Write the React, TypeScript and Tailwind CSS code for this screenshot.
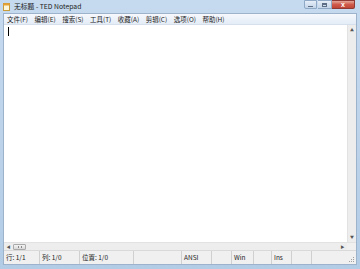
const font = { fontFamily: '"Noto Sans CJK SC", "Liberation Sans", sans-serif' };

const menus = ["文件(F)", "编辑(E)", "搜索(S)", "工具(T)", "收藏(A)", "剪辑(C)", "选项(O)", "帮助(H)"];

const panels: { label: string; w: string }[] = [
  { label: "行: 1/1", w: "w-[36px]" },
  { label: "列: 1/0", w: "w-[40px]" },
  { label: "位置: 1/0", w: "w-[54px]" },
  { label: "", w: "w-[48px]" },
  { label: "ANSI", w: "w-[30px]" },
  { label: "", w: "w-[20px]" },
  { label: "Win", w: "w-[22px]" },
  { label: "", w: "w-[18px]" },
  { label: "Ins", w: "w-[20px]" },
  { label: "", w: "w-[20px]" },
];

const App: React.FC = () => {
  return (
    <div
      className="w-[360px] h-[269px] flex flex-col bg-gradient-to-b from-[#c6daef] via-[#bcd3ea] to-[#b3cce6] text-[#1e1e1e] overflow-hidden"
      style={font}
    >
      {/* title bar */}
      <div className="h-[13px] flex items-start shrink-0">
        <div className="flex items-center h-[13px] pl-[3px] gap-[4px]">
          <svg width="7" height="8" viewBox="0 0 7 8">
            <rect x="0.5" y="0.5" width="6" height="7" fill="#fdf6d8" stroke="#c89a3a" />
            <rect x="0.5" y="0.5" width="6" height="2" fill="#e8a030" />
          </svg>
          <span className="text-[6.8px] leading-none text-[#1a1a1a]">无标题 - TED Notepad</span>
        </div>
        <div className="ml-auto flex mr-[5px]">
          <div className="w-[13px] h-[9px] mr-[1px] rounded-bl-[2px] border border-[#8ea8c6] bg-gradient-to-b from-[#e6eef8] to-[#c3d4e8] flex items-end justify-center pb-[1px]">
            <div className="w-[5px] h-[1.5px] bg-[#5d6f86]" />
          </div>
          <div className="w-[14px] h-[9px] border border-l-0 border-[#8ea8c6] bg-gradient-to-b from-[#e6eef8] to-[#c3d4e8] flex items-center justify-center">
            <div className="w-[5px] h-[4px] border border-[#5d6f86] border-t-2" />
          </div>
          <div className="w-[23px] h-[9px] rounded-br-[2px] border border-l-0 border-[#8f3a34] bg-gradient-to-b from-[#e5a69a] via-[#cf5a4b] to-[#c04536] flex items-center justify-center">
            <span className="text-[7px] leading-none font-bold text-white" style={{ fontFamily: '"Liberation Sans", sans-serif' }}>x</span>
          </div>
        </div>
      </div>

      {/* client area */}
      <div className="flex-1 flex flex-col mx-[3px] min-h-0 border border-[#9db3cc]">
        {/* menu bar */}
        <div className="h-[11px] shrink-0 flex items-center gap-[6.5px] pl-[3px] bg-gradient-to-b from-[#f6f9fd] to-[#e4ecf6] border-b border-[#d6e0ec]">
          {menus.map((m) => (
            <span key={m} className="text-[6.5px] leading-none text-[#222]">
              {m}
            </span>
          ))}
        </div>

        {/* editor */}
        <div className="flex-1 flex min-h-0">
          <div className="flex-1 bg-white pl-[4px] pt-[2px]">
            <div className="w-[1px] h-[9px] bg-black" />
          </div>
          <div className="w-[9px] bg-[#ededed] border-l border-[#e2e2e2] flex flex-col items-center justify-between py-[3px]">
            <span className="text-[4px] leading-none text-[#555]">▲</span>
            <span className="text-[4px] leading-none text-[#555]">▼</span>
          </div>
        </div>

        {/* horizontal scrollbar */}
        <div className="h-[8px] shrink-0 flex bg-[#ededed] border-t border-[#e2e2e2]">
          <div className="w-[9px] flex items-center justify-center">
            <span className="text-[4px] leading-none text-[#555]">◀</span>
          </div>
          <div className="w-[13px] h-[6px] mt-[0.5px] rounded-[1px] border border-[#aaa] bg-gradient-to-b from-[#f4f4f4] to-[#d8d8d8] flex items-center justify-center">
            <div className="w-[4px] h-[2px] border-x border-[#888]" />
          </div>
          <div className="flex-1" />
          <div className="w-[9px] flex items-center justify-center">
            <span className="text-[4px] leading-none text-[#555]">▶</span>
          </div>
          <div className="w-[9px] bg-[#f0f0f0]" />
        </div>

        {/* status bar */}
        <div className="h-[14px] shrink-0 flex items-stretch bg-[#f0f0f0] border-t border-[#d9d9d9]">
          {panels.map((p, i) => (
            <div
              key={i}
              className={`${p.w} border-r border-[#d0d0d0] flex items-center pl-[2px] text-[6.5px] leading-none text-[#222]`}
            >
              {p.label}
            </div>
          ))}
          <div className="flex-1 flex items-end justify-end pr-[1px] pb-[1px]">
            <svg width="6" height="6" viewBox="0 0 6 6">
              <rect x="4" y="4" width="1" height="1" fill="#a0a0a0" />
              <rect x="2" y="4" width="1" height="1" fill="#a0a0a0" />
              <rect x="4" y="2" width="1" height="1" fill="#a0a0a0" />
              <rect x="0" y="4" width="1" height="1" fill="#a0a0a0" />
              <rect x="2" y="2" width="1" height="1" fill="#a0a0a0" />
              <rect x="4" y="0" width="1" height="1" fill="#a0a0a0" />
            </svg>
          </div>
        </div>
      </div>
      <div className="h-[4px] shrink-0" />
    </div>
  );
};

export default App;
